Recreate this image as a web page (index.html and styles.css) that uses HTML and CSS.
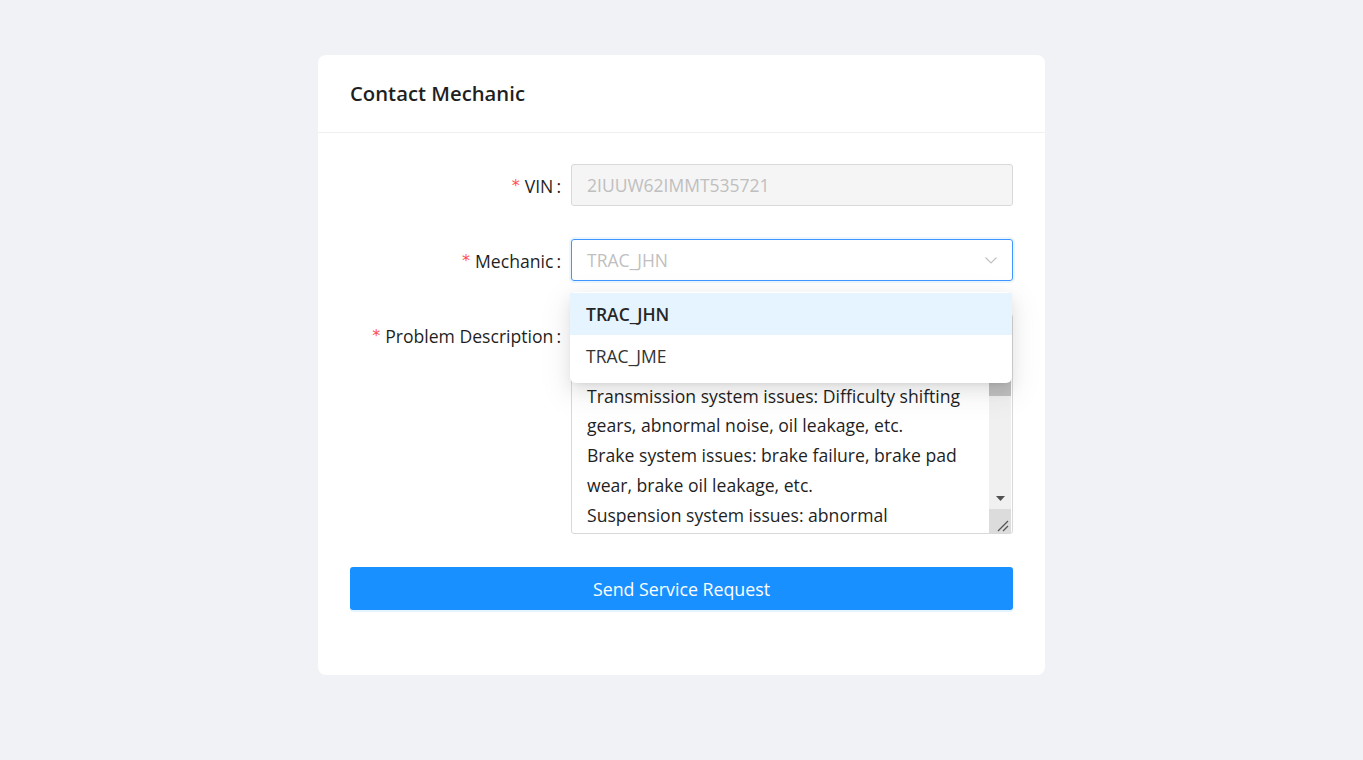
FILE: index.html
```html
<!DOCTYPE html>
<html lang="en">
<head>
<meta charset="utf-8">
<title>Contact Mechanic</title>
<link rel="stylesheet" href="styles.css">
</head>
<body>
<div class="card">
  <div class="card-head">Contact Mechanic</div>
  <form class="card-body">
    <div class="row">
      <label class="label"><span class="req">*</span>VIN<span class="colon">:</span></label>
      <div class="control">
        <input class="input disabled" type="text" value="2IUUW62IMMT535721" disabled>
      </div>
    </div>
    <div class="row">
      <label class="label"><span class="req">*</span>Mechanic<span class="colon">:</span></label>
      <div class="control">
        <div class="select">
          <span class="select-text">TRAC_JHN</span>
          <svg class="arrow" width="14" height="14" viewBox="0 0 14 14"><path d="M1.5 4.5 L7 10 L12.5 4.5" fill="none" stroke="#c2c2c2" stroke-width="1.2"/></svg>
          <div class="dropdown">
            <div class="option active">TRAC_JHN</div>
            <div class="option">TRAC_JME</div>
          </div>
        </div>
      </div>
    </div>
    <div class="row">
      <label class="label"><span class="req">*</span>Problem Description<span class="colon">:</span></label>
      <div class="control">
        <div class="ta-wrap">
          <textarea class="textarea">Engine issues: abnormal noise, difficulty
starting, power loss, excessive fuel use, etc.
Transmission system issues: Difficulty shifting
gears, abnormal noise, oil leakage, etc.
Brake system issues: brake failure, brake pad
wear, brake oil leakage, etc.
Suspension system issues: abnormal
noise, uneven tire wear, vehicle deviation, etc.
Electrical system issues: battery failure,
lighting failure, starter motor problems, etc.
Cooling system issues: overheating, coolant
leakage, radiator damage, etc.
Steering system issues: heavy steering,
abnormal noise, steering wheel vibration, etc.
Exhaust system issues: excessive emissions,
abnormal exhaust noise, black smoke, etc.
Tire issues: punctures, abnormal wear,
low pressure, etc.</textarea>
          <div class="sbar" aria-hidden="true">
            <div class="sbtn"><svg width="9" height="5" viewBox="0 0 9 5"><path d="M0 5 L4.5 0 L9 5Z" fill="#505050"/></svg></div>
            <div class="strack"><div class="sthumb"></div></div>
            <div class="sbtn"><svg width="9" height="5" viewBox="0 0 9 5"><path d="M0 0 L9 0 L4.5 5Z" fill="#505050"/></svg></div>
            <div class="sresize"><svg width="22" height="24" viewBox="0 0 22 24"><path d="M9 22 L19 12 M14 22 L19 17" stroke="#555" stroke-width="1.3" fill="none"/></svg></div>
          </div>
        </div>
      </div>
    </div>
    <div class="row">
      <button class="btn" type="button">Send Service Request</button>
    </div>
  </form>
</div>
</body>
</html>
```
FILE: styles.css
```css
* { box-sizing: border-box; }
html, body { margin: 0; padding: 0; }
body {
  background: #f0f2f5;
  font-family: "Open Sans", "Noto Sans", sans-serif;
  color: rgba(0,0,0,0.85);
  min-height: 760px;
  padding-top: 55px;
}
.card {
  width: 727px;
  height: 620px;
  margin: 0 auto;
  background: #fff;
  border-radius: 8px;
}
.card-head {
  height: 78px;
  padding: 0 32px 2px;
  display: flex;
  align-items: center;
  font-size: 20.3px;
  font-weight: 600;
  color: #1f1f1f;
  border-bottom: 1px solid #f0f0f0;
}
.card-body {
  padding: 31px 32px 32px;
  margin: 0;
}
.row {
  display: flex;
  align-items: flex-start;
  margin-bottom: 33px;
}
.label {
  width: 221px;
  flex: none;
  height: 42px;
  display: flex;
  align-items: center;
  justify-content: flex-end;
  font-size: 17.6px;
  color: #1f1f1f;
  padding-right: 10px;
  padding-top: 1px;
  white-space: nowrap;
}
.req {
  color: #ff4d4f;
  margin-right: 5px;
  font-family: "DejaVu Sans", sans-serif;
  font-size: 16px;
}
.colon { margin-left: 3px; }
.control { flex: 1; min-width: 0; }
.input {
  display: block;
  width: 100%;
  height: 42px;
  border: 1px solid #d9d9d9;
  border-radius: 3px;
  padding: 0 15px;
  font-family: inherit;
  font-size: 17.5px;
  outline: none;
}
.input.disabled {
  background: #f5f5f5;
  color: #bfbfbf;
}
.select {
  position: relative;
  height: 42px;
  border: 1px solid #4096ff;
  border-radius: 3px;
  box-shadow: 0 0 0 2px rgba(5,145,255,0.08);
  display: flex;
  align-items: center;
  padding: 0 15px;
  font-size: 17.5px;
}
.select-text { flex: 1; color: #bfbfbf; }
.arrow { flex: none; margin-right: -1px; }
.dropdown {
  position: absolute;
  top: 52px;
  left: -2px;
  right: 0;
  z-index: 5;
  background: #fff;
  border-radius: 6px;
  padding: 1px 0 6px;
  box-shadow: 0 6px 16px 0 rgba(0,0,0,0.08), 0 3px 6px -4px rgba(0,0,0,0.12), 0 9px 28px 8px rgba(0,0,0,0.05);
}
.option {
  height: 42px;
  display: flex;
  align-items: center;
  padding: 0 16px;
  font-size: 17.5px;
  color: #333;
}
.option.active {
  background: #e6f4ff;
  font-weight: 600;
  color: #262626;
}
.ta-wrap {
  display: flex;
  height: 220px;
  border: 1px solid #d9d9d9;
  border-radius: 3px;
  overflow: hidden;
  background: #fff;
}
.textarea {
  display: block;
  flex: 1;
  min-width: 0;
  height: 100%;
  border: none;
  padding: 7px 0 6px 15px;
  font-family: inherit;
  font-size: 17.6px;
  line-height: 29.8px;
  color: #1f1f1f;
  white-space: pre;
  overflow: hidden;
  resize: none;
  outline: none;
  background: transparent;
}
.sbar {
  flex: none;
  width: 22px;
  margin-right: 1px;
  display: flex;
  flex-direction: column;
  background: #f0f0f0;
}
.sbtn {
  height: 21px;
  flex: none;
  display: flex;
  align-items: center;
  justify-content: center;
}
.strack { flex: 1; }
.sthumb {
  height: 60px;
  background: #c1c1c1;
}
.sresize {
  height: 24px;
  flex: none;
  background: #dcdcdc;
  display: flex;
}
.btn {
  display: block;
  width: 100%;
  height: 43px;
  border: none;
  border-radius: 3px;
  background: #1890ff;
  color: #fff;
  font-family: inherit;
  font-size: 17.8px;
  box-shadow: 0 2px 0 rgba(5,145,255,0.1);
  cursor: pointer;
}
```
